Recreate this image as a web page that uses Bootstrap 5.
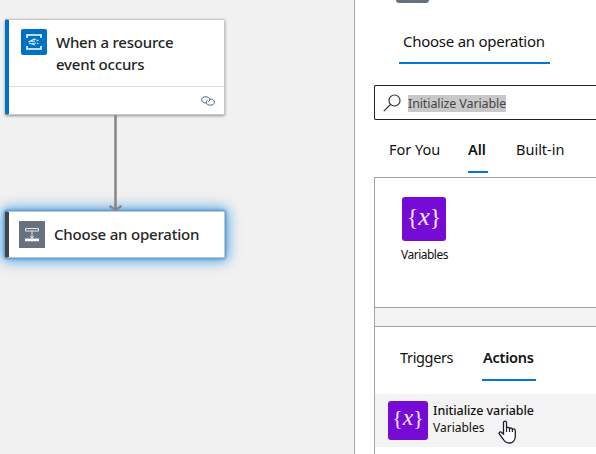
<!DOCTYPE html>
<html lang="en">
<head>
<meta charset="utf-8">
<meta name="viewport" content="width=device-width, initial-scale=1">
<title>Workflow designer</title>
<link href="https://cdn.jsdelivr.net/npm/bootstrap@5.3.0/dist/css/bootstrap.min.css" rel="stylesheet">
<style>
body{font-family:"Noto Sans","Open Sans",sans-serif;font-size:14px;line-height:22px;color:#111;height:454px;background:#f1f1f1}
svg{display:block;flex:none}
.designer{width:354px;padding:19px 0 0 5px}
.node{width:220px;background:#fff;border:1px solid #c8c8c8;border-left:4px solid #0072c6;border-radius:2px;color:#252525}
.trigger{height:96px;box-shadow:0 1px 3px rgba(0,0,0,.4)}
.trigger-head{height:66px;padding:9px 0 0 12px;gap:9px}
.trigger-foot{height:28px;border-top:1px solid #dcdcdc;padding-right:9px}
.trigger-title{padding-top:2px;font-size:15px;letter-spacing:-.21px;font-weight:500}
.connector{margin-left:103px}
.choose{height:47px;padding-left:10px;gap:9px;border-color:#c9c5c0;border-left-color:#444;box-shadow:0 0 3px 1px #3d97dd,0 0 13px 3px rgba(0,120,215,.65);font-size:15px;font-weight:500;letter-spacing:-.2px}
.choose span{margin-top:-2px}
.panel{border-left:1px solid #a9a9a9;padding-left:19px;min-width:0}
.op-icon{width:33px;height:3px;margin-left:22px;background:#68727f;border-radius:0 0 3px 3px}
.tab{border-bottom:2px solid #0078d4;white-space:nowrap}
.tab-main{width:151px;height:61px;margin-left:25px;padding:27px 0 0 4px;font-size:15px;letter-spacing:-.26px}
.search{height:35px;margin-top:21px;border:1px solid #222;border-right:0;border-radius:2px 0 0 2px;padding-left:8px;gap:7px}
.picked{background:#c8c8c8;color:#444;font-size:12.5px;line-height:17px;height:17px;letter-spacing:-.11px;margin-top:2px}
.scopes{height:57px;padding:18px 0 0 15px;font-size:14.5px}
.scopes span{height:35px}
.s-for{width:79px}
.s-all{width:20px;margin-right:28px}
.connectors{height:131px;border:1px solid #a3a3a3;border-right:0;padding:19px 0 0 27px}
.var-label{font-size:12px;letter-spacing:-.5px;margin:3px 0 0 -1px}
.gap-band{height:18px;background:#f3f3f3;border-left:1px solid #a3a3a3}
.results{height:128px;border:solid #a3a3a3;border-width:1px 0 0 1px}
.kinds{height:67px;padding:19px 0 0 25px;font-size:14.5px}
.kinds span{height:35px}
.k-trig{width:82px;letter-spacing:-.35px}
.k-act{width:54px;padding-left:1px;font-weight:600;letter-spacing:-.25px}
.result{height:53px;background:#f3f3f3;padding:7px 0 0 13px;gap:5px;line-height:17px;font-size:12px}
.result-text{padding-top:1px}
.result-name{font-weight:500;font-size:12.5px;letter-spacing:-.05px}
.var-icon{width:44px;height:44px;background:#770bd6;border-radius:3px}
.var-icon-sm{width:40px;height:39px}
.glyph{font-family:"Liberation Serif",serif;fill:#f4eafd;text-anchor:middle}
.pointer{position:absolute;left:498px;top:420px}
</style>
</head>
<body class="d-flex overflow-hidden position-relative">
<main class="designer flex-shrink-0">
  <div class="node trigger">
    <div class="trigger-head d-flex">
      <svg width="26" height="26" viewBox="0 0 26 26"><rect width="26" height="26" rx="2" fill="#0072c6"/><path d="M6 9V6h14v3M6 17v3h14v-3" fill="none" stroke="#fff" stroke-width="1.600"/><path d="M7.500 13l6-3 1.500.8M10 12.500l4-.5M8 14l6 2M11 14.500l4-.5M15.500 12l2-1M16 14.500h1.500" fill="none" stroke="#d4e9f8" stroke-width="1.200"/></svg>
      <div class="trigger-title">When a resource<br>event occurs</div>
    </div>
    <div class="trigger-foot d-flex align-items-center justify-content-end">
      <svg width="14" height="10" viewBox="0 0 14 10" fill="none" stroke="#3e6383"><path d="M5.500 7C2.500 7 .6 5.700.6 3.800S2.300.8 4.700.8s4 1.200 4 2.900c0 1-.6 1.800-1.500 2.300"/><path d="M8.500 3c3 0 4.900 1.300 4.900 3.200s-1.700 3-4.100 3-4-1.200-4-2.900c0-1 .6-1.800 1.500-2.300"/></svg>
    </div>
  </div>
  <svg class="connector" width="14" height="96" viewBox="0 0 14 96" fill="none" stroke="#858585"><path d="M7.500 0v95" stroke-width="2.500"/><path d="M1.500 91l6 4 6-4" stroke-width="2.200"/></svg>
  <div class="node choose d-flex align-items-center">
    <svg width="26" height="27" viewBox="0 0 26 27"><path fill="#68727f" d="M0 0h26v27H0z"/><path d="M6.500 7.500h13v2.500h-13zM13 10v7M11 15l2 2 2-2" fill="none" stroke="#e5e8eb"/><path d="M6 17.500h14v2.800H6z" fill="#fff"/></svg>
    <span>Choose an operation</span>
  </div>
</main>
<aside class="panel bg-white flex-grow-1">
  <div class="op-icon"></div>
  <div class="tab tab-main"><span>Choose an operation</span></div>
  <div class="search d-flex align-items-center">
    <svg width="18" height="18" viewBox="0 0 18 18" fill="none" stroke="#333" stroke-width="1.200"><circle cx="11.500" cy="6.500" r="5.500"/><path d="M7.500 10.500L.8 17.200"/></svg>
    <span class="picked">Initialize Variable</span>
  </div>
  <nav class="scopes d-flex">
    <span class="s-for">For You</span><span class="tab fw-semibold s-all">All</span><span class="s-built">Built-in</span>
  </nav>
  <section class="connectors">
    <div class="var-icon"><svg width="44" height="44" viewBox="0 0 44 44"><text class="glyph" font-size="24"><tspan x="10.500" y="27.500">{</tspan><tspan class="fst-italic" x="22" y="27.500" font-size="26">x</tspan><tspan x="33.500" y="27.500">}</tspan></text></svg></div>
    <div class="var-label">Variables</div>
  </section>
  <div class="gap-band"></div>
  <section class="results">
    <nav class="kinds d-flex">
      <span class="k-trig">Triggers</span><span class="tab k-act">Actions</span>
    </nav>
    <div class="result d-flex">
      <div class="var-icon var-icon-sm"><svg width="40" height="39" viewBox="0 0 44 43"><text class="glyph" font-size="24"><tspan x="10.500" y="27">{</tspan><tspan class="fst-italic" x="22" y="27" font-size="26">x</tspan><tspan x="33.500" y="27">}</tspan></text></svg></div>
      <div class="result-text"><div class="result-name">Initialize variable</div><div>Variables</div></div>
    </div>
  </section>
</aside>
<svg class="pointer" width="19" height="24" viewBox="0 0 19 24"><path d="M5.500 14V2.800C5.500.6 8.500.6 8.500 2.800V8c.5-1 2.700-.9 3 .5.600-.9 2.600-.6 2.900.8 1-.8 2.900-.3 2.900 1.500V16c0 4-2.300 7-6 7-3 0-4.800-1.400-6-3.700L1.300 14c-.8-1.700 1.200-2.700 2.400-1.500z" fill="#fff" stroke="#1d1d2b" stroke-width="1.300"/><path d="M8.500 8v4M11.500 8.500V12M14.400 9.500V12" stroke="#1d1d2b" stroke-width="1.200"/></svg>
</body>
</html>
